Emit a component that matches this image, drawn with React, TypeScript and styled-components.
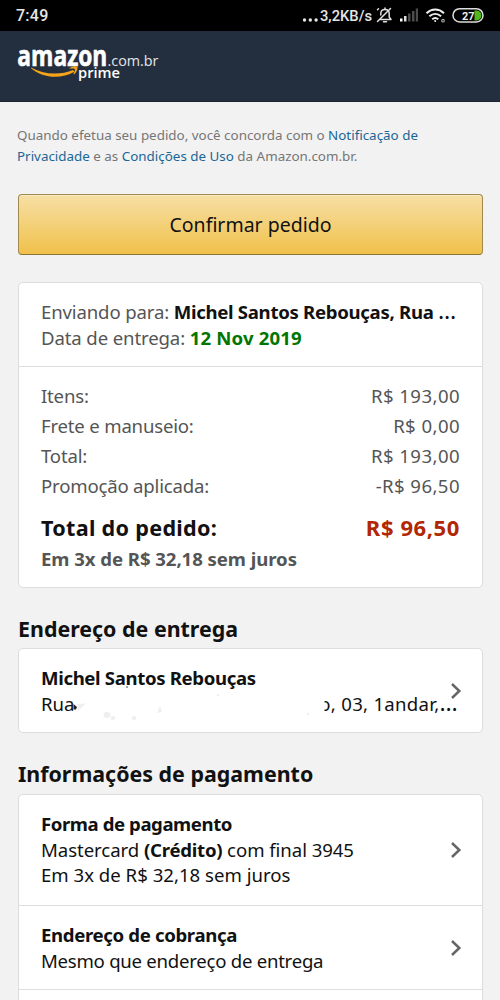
import React from "react";
import styled, { createGlobalStyle } from "styled-components";

const GlobalStyle = createGlobalStyle`
  * { box-sizing: border-box; }
  html, body { margin: 0; height: 1000px; overflow: hidden; }
  body {
    background: #f2f2f2;
    color: #111;
    font-family: "Noto Sans", "Open Sans", sans-serif;
    -webkit-font-smoothing: antialiased;
  }
`;

const Screen = styled.div`
  width: 500px;
  height: 1000px;
  overflow: hidden;
  display: flex;
  flex-direction: column;
`;

const StatusBar = styled.div`
  flex: none;
  height: 31px;
  background: #000;
  color: #e6e6e6;
  display: flex;
  align-items: center;
  justify-content: space-between;
  padding: 0 16px;
  font-family: Roboto, sans-serif;
`;

const Clock = styled.span`
  font-size: 16px;
  font-weight: 500;
  letter-spacing: 0.25px;
`;

const Header = styled.header`
  flex: none;
  height: 71px;
  background: #232f3e;
  border-bottom: 1px solid #1b2532;
  padding: 15px 0 0 16px;
`;

const LogoSvg = styled.svg`
  display: block;
  overflow: visible;
`;

const Page = styled.main`
  flex: none;
  padding: 23px 18px 0 18px;
`;

const Legal = styled.p`
  margin: 0 0 27px -1px;
  color: #767676;
  font-size: 13.4px;
  line-height: 21px;
  white-space: nowrap;
`;

const Link = styled.a`
  color: #1a6696;
`;

const ConfirmButton = styled.button`
  display: block;
  width: 465px;
  height: 61px;
  margin: 0 0 27px;
  padding: 0;
  border: 1px solid #a08a50;
  border-bottom-color: #8b7434;
  border-radius: 4px;
  background: linear-gradient(#f7dfa5, #f0c14b);
  box-shadow: inset 0 1px 0 rgba(255, 255, 255, 0.35);
  color: #111;
  font-family: inherit;
  font-size: 19.5px;
`;

const Card = styled.section<{ $gap?: number }>`
  width: 465px;
  margin-bottom: ${(p) => p.$gap ?? 0}px;
  background: #fff;
  border: 1px solid #ddd;
  border-radius: 5px;
`;

const Panel = styled.div<{ $height: number; $top: number; $last?: boolean }>`
  position: relative;
  height: ${(p) => p.$height}px;
  padding: ${(p) => p.$top}px 22px 0;
  border-bottom: ${(p) => (p.$last ? "none" : "1px solid #ddd")};
`;

const Line = styled.div<{ $muted?: boolean; $bold?: boolean; $track?: number }>`
  font-size: 18.6px;
  line-height: 25.5px;
  white-space: nowrap;
  color: ${(p) => (p.$muted ? "#555" : "#111")};
  font-weight: ${(p) => (p.$bold ? 700 : 400)};
  letter-spacing: ${(p) => p.$track ?? 0}px;
`;

const Strong = styled.b<{ $track?: number }>`
  color: #111;
  letter-spacing: ${(p) => p.$track ?? 0}px;
`;

const Ellipsis = styled.span`
  color: #111;
  font-size: 23px;
  font-weight: 400;
  line-height: 0;
`;

const DeliveryDate = styled.b`
  color: #007600;
  letter-spacing: 0.15px;
`;

const PriceRow = styled.div`
  display: flex;
  justify-content: space-between;
  height: 30px;
  font-size: 18.6px;
  line-height: 30px;
  letter-spacing: -0.2px;
  color: #555;
`;

const Price = styled.span`
  letter-spacing: 0.42px;
`;

const TotalRow = styled.div`
  display: flex;
  justify-content: space-between;
  align-items: baseline;
  margin: 8px 0 0;
  font-size: 21.6px;
  font-weight: 700;
  line-height: 36px;
  letter-spacing: 0.3px;
`;

const TotalPrice = styled.span`
  color: #b12704;
  font-size: 22px;
  letter-spacing: 0.6px;
`;

const Heading = styled.h2<{ $below: number }>`
  margin: 0 0 ${(p) => p.$below}px;
  font-size: 21.4px;
  line-height: 28px;
  white-space: nowrap;
`;

const AddressLine = styled(Line)`
  display: flex;
  justify-content: space-between;
  width: 417px;
`;

const AddressTail = styled.span`
  letter-spacing: 0.28px;
`;

const ChevronBox = styled.svg<{ $top: number }>`
  position: absolute;
  right: 19px;
  top: ${(p) => p.$top}px;
`;

const SmudgeLayer = styled.svg`
  position: absolute;
  left: 50px;
  top: 35px;
`;

const Chevron = ({ top }: { top: number }) => (
  <ChevronBox $top={top} width="14" height="18" viewBox="0 0 14 18" fill="none">
    <path d="M3 2L10.3 9L3 16" stroke="#666" strokeWidth="2.5" />
  </ChevronBox>
);

const StatusIcons = () => (
  <svg width="184" height="31" viewBox="0 0 184 31" fill="none">
    <g fill="#e6e6e6">
      <circle cx="4.5" cy="20" r="1.7" />
      <circle cx="10.3" cy="20" r="1.7" />
      <circle cx="16.1" cy="20" r="1.7" />
    </g>
    <text x="20" y="21" fill="#e6e6e6" fontFamily="Roboto, sans-serif" fontSize="15" fontWeight="500" textLength="52" lengthAdjust="spacingAndGlyphs">3,2KB/s</text>
    <g stroke="#e0e0e0" strokeWidth="1.5" strokeLinecap="round" strokeLinejoin="round">
      <path d="M80.500 19.500H91L89.200 17V13.500C89.200 10.800 87.500 9.500 85 9.500C82.500 9.500 80.800 10.800 80.800 13.500V15" />
      <path d="M83.500 21.800H86.500M85 8V9M77.500 21.500L90.500 8.500M77.500 9.800L78.500 8.800" />
    </g>
    <g>
      <rect x="100" y="18.5" width="2.5" height="3" fill="#fff" />
      <rect x="104" y="16" width="2.5" height="5.5" fill="#ddd" />
      <rect x="108" y="13.5" width="2.5" height="8" fill="#4c4c4c" />
      <rect x="112" y="11" width="2.5" height="10.5" fill="#4c4c4c" />
      <rect x="115.8" y="8.5" width="2.2" height="13" fill="#4c4c4c" />
    </g>
    <g stroke="#eee" strokeWidth="2">
      <path d="M126.5 13.2C131.8 8.4 138.8 8.4 144 13.2" />
      <path d="M129.4 16.3C133 13.2 137.6 13.2 141.1 16.3" />
      <path d="M132.2 19.2C134 17.7 136.5 17.7 138.3 19.2" />
      <circle cx="135.2" cy="21" r="1" fill="#eee" stroke="none" />
      <circle cx="143" cy="20.700" r="1.300" strokeWidth="1.100" stroke="#aaa" />
    </g>
    <path d="M174.500 10.500H176.500A5 5 0 0 1 176.500 20.500H174.500Z" fill="#50b81c" />
    <rect x="153" y="8.700" width="30" height="13.300" rx="6.600" stroke="#ddd" strokeWidth="1.500" />
    <text x="162" y="19.500" fill="#eee" fontFamily="Roboto, sans-serif" fontSize="11.500" fontWeight="700" textLength="12.500" lengthAdjust="spacingAndGlyphs">27</text>
  </svg>
);

const Logo = () => (
  <LogoSvg width="150" height="44" viewBox="0 0 150 44">
    <g fill="#fff" fontFamily="'Open Sans', 'Noto Sans', sans-serif">
      <text x="1.300" y="19.800" fontSize="28" fontWeight="700" stroke="#fff" strokeWidth="0.600" textLength="90" lengthAdjust="spacingAndGlyphs">amazon</text>
      <text x="91.500" y="19.800" fontSize="15" fill="#e3e6e9" textLength="51" lengthAdjust="spacingAndGlyphs">.com.br</text>
      <text x="62" y="32" fontSize="14.500" fontWeight="600" textLength="42" lengthAdjust="spacingAndGlyphs">prime</text>
    </g>
    <g fill="#f5a31a">
      <path d="M15 21.500C27 28.500 44 29.500 57 24L58.500 25.800C45 33.500 27 32.500 15 22.300Z" />
      <path d="M53.500 22C57 20 60.800 20 61.500 21C62 22.500 60.500 26.500 58 28.500L57.500 28C58.500 25.500 59.300 23.800 58.800 23.200C58 22.400 55.500 22.500 53.500 22.700Z" />
    </g>
  </LogoSvg>
);

const Smudges = () => (
  <SmudgeLayer width="270" height="38" viewBox="0 0 270 38">
    <rect x="242" y="10" width="13.500" height="18" fill="#fff" />
    <g fill="#efefef">
      <path d="M8 20L17 19.500L12 24L9 27Z" />
      <ellipse cx="38" cy="31" rx="3.500" ry="3" />
      <ellipse cx="44" cy="34" rx="2.500" ry="2" />
      <ellipse cx="65" cy="34" rx="2.500" ry="2" />
      <path d="M88 29L91 22L93 28Z" />
      <circle cx="149" cy="11" r="1.300" />
      <circle cx="239" cy="30" r="1.300" />
    </g>
    <path d="M4.500 20L8 23L7 25.500L4.500 25.500Z" fill="#222" />
    <circle cx="58" cy="3" r="1" fill="#888" />
  </SmudgeLayer>
);

const prices = [
  ["Itens:", "R$ 193,00"],
  ["Frete e manuseio:", "R$ 0,00"],
  ["Total:", "R$ 193,00"],
  ["Promoção aplicada:", "-R$ 96,50"],
];

export default function App() {
  return (
    <Screen>
      <GlobalStyle />
      <StatusBar>
        <Clock>7:49</Clock>
        <StatusIcons />
      </StatusBar>
      <Header>
        <Logo />
      </Header>
      <Page>
        <Legal>
          Quando efetua seu pedido, você concorda com o <Link>Notificação de</Link>
          <br />
          <Link>Privacidade</Link> e as <Link>Condições de Uso</Link> da Amazon.com.br.
        </Legal>
        <ConfirmButton>Confirmar pedido</ConfirmButton>

        <Card $gap={27}>
          <Panel $height={84} $top={16}>
            <Line $muted $track={-0.15}>
              Enviando para: <Strong $track={-0.3}>Michel Santos Rebouças, Rua </Strong>
              <Ellipsis>…</Ellipsis>
            </Line>
            <Line $muted $track={-0.13}>
              Data de entrega: <DeliveryDate>12 Nov 2019</DeliveryDate>
            </Line>
          </Panel>
          <Panel $height={220} $top={14} $last>
            {prices.map(([label, value]) => (
              <PriceRow key={label}>
                <span>{label}</span>
                <Price>{value}</Price>
              </PriceRow>
            ))}
            <TotalRow>
              <span>Total do pedido:</span>
              <TotalPrice>R$ 96,50</TotalPrice>
            </TotalRow>
            <Line $muted $bold $track={-0.06}>Em 3x de R$ 32,18 sem juros</Line>
          </Panel>
        </Card>

        <Heading $below={5}>Endereço de entrega</Heading>
        <Card $gap={27}>
          <Panel $height={83} $top={16} $last>
            <Line $bold $track={-0.35}>Michel Santos Rebouças</Line>
            <AddressLine>
              <span>Rua</span>
              <AddressTail>o, 03, 1andar,<Ellipsis>…</Ellipsis></AddressTail>
            </AddressLine>
            <Smudges />
            <Chevron top={33} />
          </Panel>
        </Card>

        <Heading $below={6}>Informações de pagamento</Heading>
        <Card>
          <Panel $height={111} $top={16}>
            <Line $bold $track={-0.43}>Forma de pagamento</Line>
            <Line $track={-0.06}>
              Mastercard <Strong $track={-0.25}>(Crédito)</Strong> com final 3945
            </Line>
            <Line>Em 3x de R$ 32,18 sem juros</Line>
            <Chevron top={46} />
          </Panel>
          <Panel $height={84} $top={16}>
            <Line $bold $track={-0.35}>Endereço de cobrança</Line>
            <Line $track={-0.26}>Mesmo que endereço de entrega</Line>
            <Chevron top={33} />
          </Panel>
          <Panel $height={60} $top={16} $last />
        </Card>
      </Page>
    </Screen>
  );
}
